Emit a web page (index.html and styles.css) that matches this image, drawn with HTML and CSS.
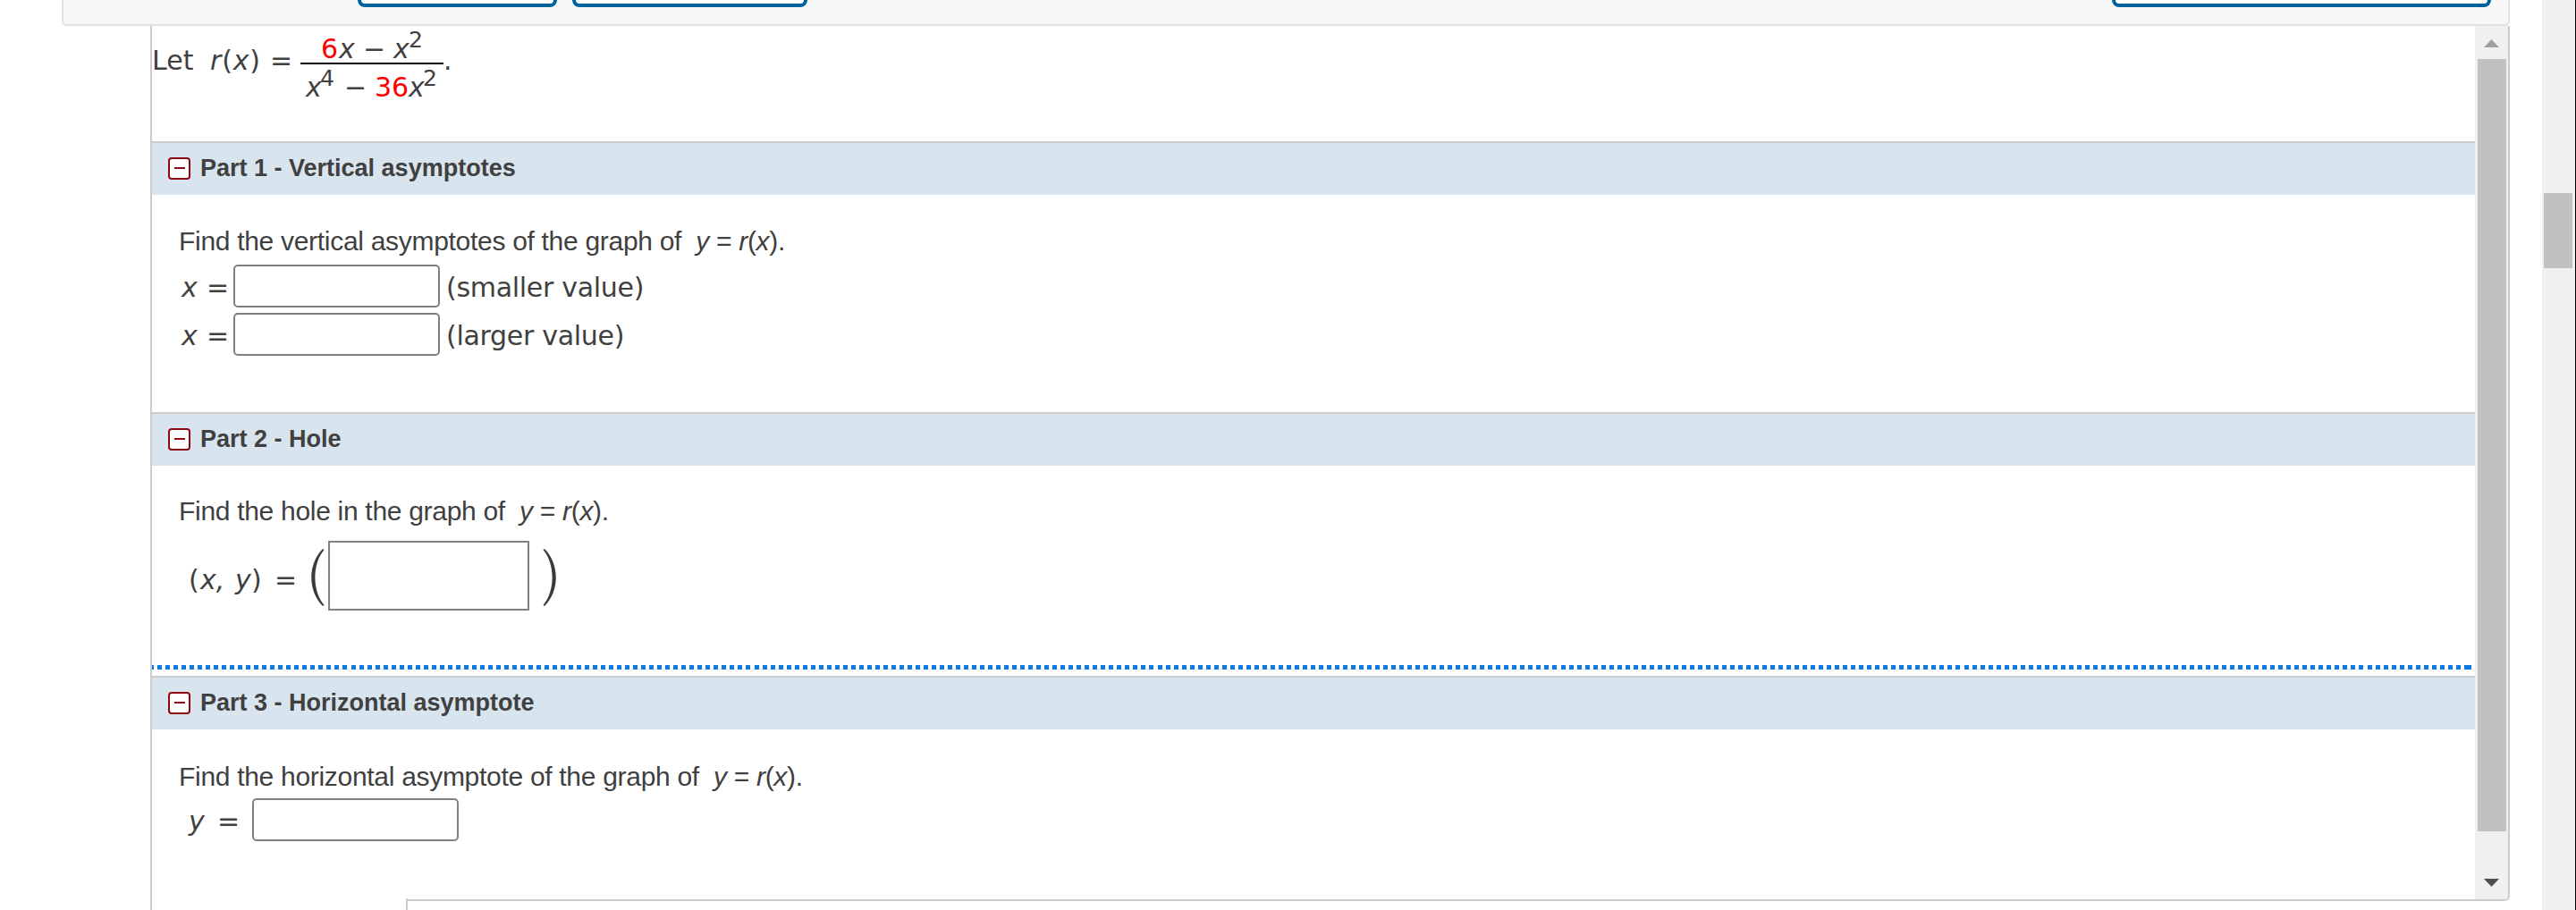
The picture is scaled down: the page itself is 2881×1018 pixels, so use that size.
FILE: index.html
```html
<!DOCTYPE html>
<html lang="en">
<head>
    <meta charset="UTF-8">
    <meta name="viewport" content="width=device-width, initial-scale=1.0">
    <title>Asymptotes</title>
    <link rel="stylesheet" href="styles.css">
</head>
<body>

<div class="page">
    <div class="toolbar">
        <div class="tool-btn first"></div>
        <div class="tool-btn second"></div>
        <div class="tool-btn last"></div>
    </div>

    <div class="panel">
        <div class="viewport">
            <div class="content">
                <div class="statement math">
                    <span class="let">Let</span>
                    <span class="func"><i>r</i>(<i>x</i>)</span>
                    <span class="equals">=</span>
                    <div class="fraction">
                        <div class="numerator">
                            <span class="red n-six">6</span>
                            <i class="n-x">x</i>
                            <span class="n-minus">−</span>
                            <i class="n-x2">x</i>
                            <span class="exp">2</span>
                        </div>
                        <div class="denominator">
                            <i class="d-x4">x</i>
                            <span class="exp d-four">4</span>
                            <span class="d-minus">−</span>
                            <span class="red d-num">36</span>
                            <i class="d-x2">x</i>
                            <span class="exp">2</span>
                        </div>
                    </div>
                    <span>.</span>
                </div>

                <div class="part-header">
                    <span class="toggle"></span>
                    <h2>Part 1 - Vertical asymptotes</h2>
                </div>
                <div class="part-body part1">
                    <p>Find the vertical asymptotes of the graph of&nbsp; <i>y</i> = <i>r</i>(<i>x</i>).</p>
                    <div class="answer math">
                        <i class="var">x</i>
                        <span class="eq">=</span>
                        <input type="text">
                        <span class="hint">(smaller value)</span>
                    </div>
                    <div class="answer math">
                        <i class="var">x</i>
                        <span class="eq">=</span>
                        <input type="text">
                        <span class="hint">(larger value)</span>
                    </div>
                </div>

                <div class="part-header">
                    <span class="toggle"></span>
                    <h2>Part 2 - Hole</h2>
                </div>
                <div class="part-body part2">
                    <p>Find the hole in the graph of&nbsp; <i>y</i> = <i>r</i>(<i>x</i>).</p>
                    <div class="point math">
                        <span class="pt-open">(</span>
                        <i class="pt-x">x,</i>
                        <i class="pt-y">y</i>
                        <span class="pt-close">)</span>
                        <span class="pt-eq">=</span>
                        <svg class="paren" width="15" height="64" viewBox="0 0 15 64"><path d="M13 0C-4 17-4 47 13 64L14.500 63C1 47 1 17 14.500 1Z"/></svg>
                        <div class="math-box"></div>
                        <svg class="paren close" width="15" height="64" viewBox="0 0 15 64"><path d="M2 0C19 17 19 47 2 64L.500 63C14 47 14 17 .500 1Z"/></svg>
                    </div>
                    <div class="dots"></div>
                </div>

                <div class="part-header">
                    <span class="toggle"></span>
                    <h2>Part 3 - Horizontal asymptote</h2>
                </div>
                <div class="part-body part3">
                    <p>Find the horizontal asymptote of the graph of&nbsp; <i>y</i> = <i>r</i>(<i>x</i>).</p>
                    <div class="answer math">
                        <i class="var">y</i>
                        <span class="eq">=</span>
                        <input type="text">
                    </div>
                </div>
                <div class="bottom-line"></div>
            </div>
            <div class="scrollbar">
                <div class="arrow up"></div>
                <div class="thumb"></div>
                <div class="arrow down"></div>
            </div>
        </div>
        <div class="below"></div>
    </div>
</div>

<!-- Page scrollbar -->
<div class="page-scroll">
    <div class="page-thumb"></div>
</div>

</body>
</html>
```
FILE: styles.css
```css
* {
    box-sizing: border-box;
}

body {
    margin: 0;
    height: 1018px;
    display: flex;
    overflow: hidden;
    background-color: #fff;
    color: #404040;
    font-family: Arial, "Liberation Sans", sans-serif;
    font-size: 30px;
}

.page {
    width: 2807px;
    height: 1018px;
}

.toolbar {
    display: flex;
    height: 29px;
    margin-left: 69px;
    padding-left: 329px;
    background-color: #f7f7f7;
    border: 2px solid #e3e3e3;
    border-top: none;
    border-radius: 0 0 5px 5px;
}

.tool-btn {
    height: 8px;
    border: 4px solid #00629b;
    border-top: none;
    border-radius: 0 0 8px 8px;
    background-color: #fff;
}

.first {
    width: 223px;
}

.second {
    width: 263px;
    margin-left: 17px;
}

.last {
    width: 424px;
    margin-left: auto;
    margin-right: 19px;
}

.panel {
    height: 989px;
    margin-left: 168px;
    border-left: 2px solid #ccc;
}

.viewport {
    display: flex;
    height: 979px;
}

.content {
    display: flex;
    flex-direction: column;
    width: 2598px;
}

.math {
    display: flex;
    align-items: flex-start;
    font-family: Verdana, "DejaVu Sans", sans-serif;
    font-size: 30px;
}

.red {
    color: #f00;
}

/* Problem statement */
.statement {
    height: 129px;
    line-height: 38px;
    padding-top: 20px;
}

.let {
    width: 65px;
}

.func {
    width: 67px;
    letter-spacing: 0.8px;
}

.equals {
    width: 34px;
}

.fraction {
    width: 160px;
    margin-top: -11px;
}

.numerator {
    display: flex;
    height: 34px;
    padding-left: 23px;
    line-height: 33px;
    border-bottom: 2px solid #000;
}

.denominator {
    display: flex;
    padding-left: 6px;
    line-height: 51px;
}

.exp {
    font-size: 25px;
}

.numerator .exp {
    line-height: 13px;
}

.denominator .exp {
    line-height: 31px;
}

.n-six {
    width: 20px;
}

.n-x {
    width: 27px;
}

.n-minus {
    width: 34px;
}

.n-x2 {
    width: 17px;
}

.d-x4 {
    width: 16px;
}

.d-four {
    width: 27px;
}

.d-minus {
    width: 34px;
}

.d-num {
    width: 38px;
}

.d-x2 {
    width: 16px;
}

/* Part headings */
.part-header {
    display: flex;
    align-items: center;
    height: 60px;
    padding-left: 18px;
    padding-bottom: 2px;
    background-color: #d9e5ee;
    border-top: 2px solid #ccc;
}

.part-header h2 {
    margin: 0 0 0 11px;
    font-size: 27px;
    line-height: 56px;
}

.toggle {
    display: flex;
    align-items: center;
    justify-content: center;
    width: 25px;
    height: 25px;
    border: 2px solid #8f0a10;
    border-radius: 4px;
    background-color: #fff;
}

.toggle::before {
    content: "";
    width: 12px;
    height: 2px;
    background-color: #8f0a10;
}

/* Part contents */
.part-body p {
    margin: 0;
    padding-left: 30px;
    line-height: 46px;
    letter-spacing: -0.3px;
}

.part1 {
    height: 243px;
    padding-top: 29px;
}

.part2 {
    height: 235px;
    padding-top: 28px;
}

.part3 {
    height: 190px;
    padding-top: 30px;
}

.answer {
    height: 48px;
    margin-top: 3px;
    padding-left: 33px;
    line-height: 51px;
}

.answer + .answer {
    margin-top: 6px;
}

.answer input {
    width: 231px;
    height: 48px;
    padding: 2px 4px;
    border: 2px solid #808080;
    border-radius: 5px;
    background-color: #fff;
    font-size: 26px;
}

.var {
    width: 28px;
}

.eq {
    width: 30px;
}

.hint {
    margin-left: 7px;
    letter-spacing: -0.3px;
}

.part3 .answer {
    margin-top: 1px;
    padding-left: 41px;
}

.part3 .var {
    width: 32px;
}

.part3 .eq {
    width: 39px;
}

.point {
    height: 78px;
    margin-top: 10px;
    padding-left: 41px;
    line-height: 87px;
}

.pt-open {
    width: 13px;
}

.pt-x {
    width: 39px;
}

.pt-y {
    width: 18px;
}

.pt-close {
    width: 26px;
}

.pt-eq {
    width: 41px;
}

.paren {
    margin-top: 9px;
    fill: #3a3a3a;
}

.math-box {
    width: 225px;
    height: 78px;
    margin: 0 15px 0 4px;
    border: 2px solid #808080;
}

.dots {
    height: 5px;
    margin: 61px 4px 0 0;
    background: repeating-linear-gradient(to right, #0a7ce2 0, #0a7ce2 5px, transparent 5px, transparent 9.02px);
    background-position-x: -3px;
}

.bottom-line {
    height: 2px;
    margin-top: auto;
    margin-left: 285px;
    background-color: #ccc;
}

/* Scrollbars */
.scrollbar {
    display: flex;
    flex-direction: column;
    align-items: center;
    width: 39px;
    padding-top: 15px;
    background-color: #f0f0f0;
    border-right: 2px solid #ccc;
    border-bottom: 2px solid #ccc;
    border-bottom-right-radius: 6px;
}

.arrow {
    width: 17px;
    height: 9px;
}

.up {
    background-color: #a0a0a0;
    clip-path: polygon(50% 0, 100% 100%, 0 100%);
}

.down {
    margin-top: 53px;
    background-color: #505050;
    clip-path: polygon(0 0, 100% 0, 50% 100%);
}

.thumb {
    width: 32px;
    height: 864px;
    margin-top: 13px;
    background-color: #c1c1c1;
}

.below {
    height: 13px;
    margin-top: -3px;
    margin-left: 284px;
    border-left: 2px solid #ccc;
}

.page-scroll {
    width: 38px;
    height: 1018px;
    margin-left: auto;
    padding: 216px 3px 0 2px;
    background-color: #f0f0f0;
    border-right: 1px solid #000;
}

.page-thumb {
    width: 32px;
    height: 84px;
    background-color: #c1c1c1;
}
```
